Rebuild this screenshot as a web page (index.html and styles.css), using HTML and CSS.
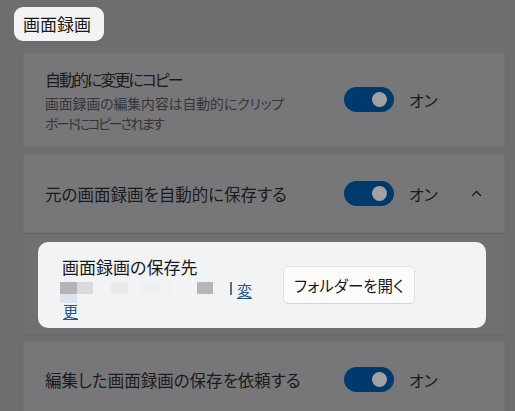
FILE: index.html
```html
<!DOCTYPE html>
<html lang="ja">
<head>
<meta charset="utf-8">
<title>画面録画</title>
<link rel="stylesheet" href="styles.css">
</head>
<body>
<div class="header"><span class="pill">画面録画</span></div>
<div class="list">
  <div class="card card-tall">
    <div class="text">
      <div class="title t1">自動的に変更にコピー</div>
      <div class="sub">画面録画の編集内容は自動的にクリップ<br><span class="kana">ボードにコピーされます</span></div>
    </div>
    <div class="controls">
      <span class="toggle"><span class="knob"></span></span>
      <span class="state">オン</span>
    </div>
  </div>
  <div class="card card-mid">
    <div class="text">
      <div class="title">元の画面録画を自動的に保存する</div>
    </div>
    <div class="controls">
      <span class="toggle"><span class="knob"></span></span>
      <span class="state">オン</span>
      <span class="chev"><svg width="11" height="7" viewBox="0 0 11 7"><polyline points="1,6 5.5,1.5 10,6" fill="none" stroke="#1b1b1b" stroke-width="1.4"/></svg></span>
    </div>
  </div>
  <div class="panel">
    <div class="popup">
      <div class="left">
        <div class="ptitle">画面録画の保存先</div>
        <div class="row1">
          <span class="blk b1"></span><span class="blk b2"></span><span class="gap g1"></span><span class="blk b3"></span><span class="gap g2"></span><span class="blk b4"></span><span class="blk b5"></span><span class="gap g3"></span><span class="blk b6"></span><span class="bar"></span><a class="link" href="#">変</a>
        </div>
        <div class="row2">
          <span class="sel"></span>
          <a class="link l2" href="#">更</a>
        </div>
      </div>
      <button class="btn">フォルダーを開く</button>
    </div>
  </div>
  <div class="card card-last">
    <div class="text">
      <div class="title">編集した画面録画の保存を依頼する</div>
    </div>
    <div class="controls">
      <span class="toggle"><span class="knob"></span></span>
      <span class="state">オン</span>
    </div>
  </div>
</div>
</body>
</html>
```
FILE: styles.css
```css
html, body {
  margin: 0;
  padding: 0;
}
body {
  width: 515px;
  height: 411px;
  overflow: hidden;
  background: #6e6e71;
  font-family: "Noto Sans CJK JP", "Noto Sans", sans-serif;
  font-feature-settings: "palt";
  color: #1b1b1b;
}
.header {
  padding: 7px 0 0 14px;
  height: 34px;
}
.pill {
  display: inline-flex;
  align-items: center;
  box-sizing: border-box;
  width: 90px;
  height: 34px;
  padding-left: 9px;
  background: #f3f3f4;
  border-radius: 9px;
  font-size: 17px;
  line-height: 20px;
  color: #1a1a1a;
}
.list {
  margin: 11px 10px 0 23px;
  display: flex;
  flex-direction: column;
}
.card {
  background: #77777a;
  border-radius: 4px;
  display: flex;
  align-items: center;
  padding-left: 22px;
  box-shadow: inset 0 0 0 1px #727275;
}
.card-tall { height: 95px; }
.card-mid { height: 79px; margin-top: 7px; border-radius: 4px 4px 0 0; }
.card-last { height: 77px; margin-top: 6px; }
.text { flex: 1; }
.card-tall .text { margin-top: 3px; }
.title {
  font-size: 16.5px;
  line-height: 20px;
  color: #1b1b1b;
}
.title.t1 {
  font-size: 16px;
  letter-spacing: -2px;
  margin-bottom: 4px;
}
.sub {
  font-size: 13.8px;
  line-height: 20px;
  color: #353537;
}
.kana { letter-spacing: -2.2px; }
.controls {
  width: 161px;
  display: flex;
  align-items: center;
}
.toggle {
  width: 50px;
  height: 25px;
  box-sizing: border-box;
  border-radius: 13px;
  background: #003a6d;
  display: flex;
  align-items: center;
  justify-content: flex-end;
  padding-right: 7px;
}
.knob {
  width: 15px;
  height: 15px;
  border-radius: 50%;
  background: #a2a2a4;
}
.state {
  margin-left: 15px;
  width: 50px;
  font-size: 16px;
  line-height: 20px;
  color: #1b1b1b;
}
.chev {
  margin-left: 7px;
  width: 20px;
  display: flex;
  justify-content: center;
}
.panel {
  height: 102px;
  box-sizing: border-box;
  background: #707073;
  border-top: 1px solid #68686b;
  padding: 8px 0 0 15px;
  box-shadow: inset 0 -1px 0 #68686b;
}
.popup {
  width: 448px;
  height: 86px;
  box-sizing: border-box;
  background: #f2f3f5;
  border-radius: 10px;
  display: flex;
  align-items: center;
  padding-left: 22px;
}
.left {
  width: 192px;
  padding-top: 4px;
}
.ptitle {
  font-size: 17px;
  line-height: 22px;
  padding-left: 2px;
  color: #1a1a1a;
}
.row1 {
  margin-top: 3px;
  display: flex;
  align-items: flex-start;
  height: 13px;
}
.blk {
  display: block;
  height: 12px;
  margin-top: 1px;
}
.b1 { width: 17px; background: #b4b4b6; }
.b2 { width: 16px; background: #dadadc; }
.g1 { width: 17px; }
.b3 { width: 18px; background: #eaebed; }
.g2 { width: 12px; }
.b4 { width: 17px; background: #eff0f2; }
.b5 { width: 17px; background: #f0f1f3; }
.g3 { width: 24px; }
.b6 { width: 16px; background: #b6b6b8; }
.gap { display: block; }
.bar {
  display: block;
  width: 2px;
  height: 13px;
  margin: 1px 0 0 17px;
  background: #6a6a6c;
}
.link {
  color: #1f568e;
  text-decoration: underline;
  text-underline-offset: 2px;
  font-size: 15px;
  line-height: 16px;
}
.row1 .link { margin-left: 5px; margin-top: 1px; }
.row2 {
  display: flex;
  flex-direction: column;
}
.sel {
  display: block;
  width: 17px;
  height: 9px;
  background: #dce5ef;
}
.l2 {
  margin-left: 3px;
  width: 16px;
}
.btn {
  margin-left: 31px;
  width: 132px;
  height: 38px;
  box-sizing: border-box;
  background: #fbfbfc;
  border: 1px solid #e2e2e4;
  border-bottom-color: #d3d3d5;
  border-radius: 5px;
  font-family: "Noto Sans CJK JP", sans-serif;
  font-feature-settings: "palt";
  font-size: 15.5px;
  color: #1a1a1a;
  padding: 0;
}
```
